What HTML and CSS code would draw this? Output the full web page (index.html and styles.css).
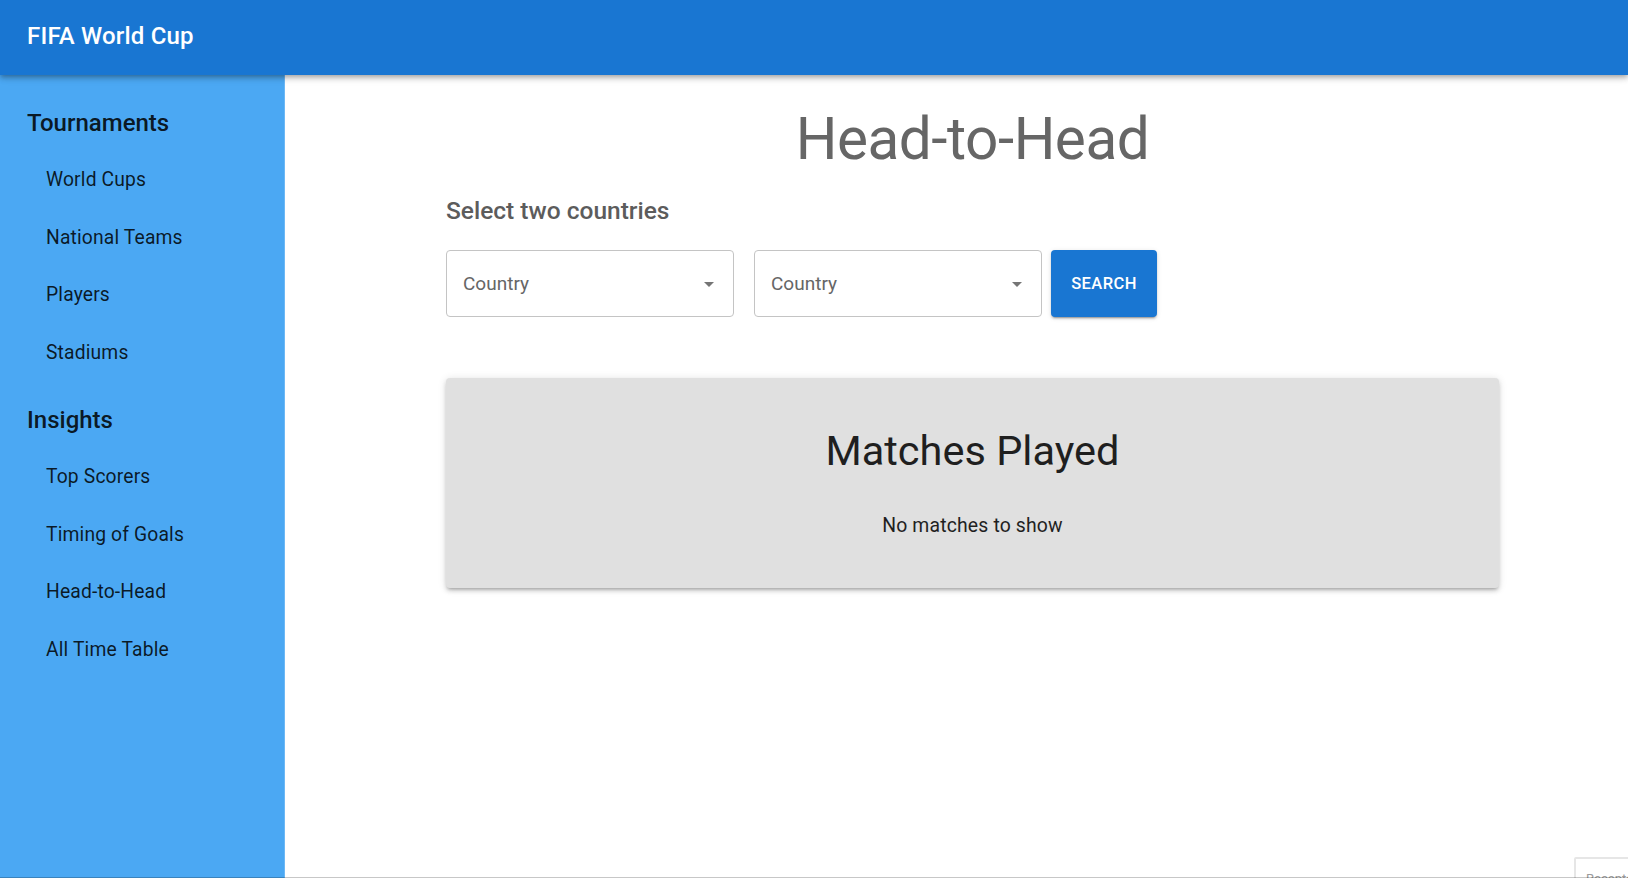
FILE: index.html
```html
<!DOCTYPE html>
<html lang="en">
<head>
<meta charset="utf-8">
<title>FIFA World Cup - Head-to-Head</title>
<link rel="stylesheet" href="styles.css">
</head>
<body>
<header class="appbar">
  <div class="brand">FIFA World Cup</div>
</header>
<div class="layout">
  <nav class="sidebar">
    <section class="nav-section">
      <h2 class="nav-heading">Tournaments</h2>
      <a class="nav-item">World Cups</a>
      <a class="nav-item">National Teams</a>
      <a class="nav-item">Players</a>
      <a class="nav-item">Stadiums</a>
    </section>
    <section class="nav-section">
      <h2 class="nav-heading">Insights</h2>
      <a class="nav-item">Top Scorers</a>
      <a class="nav-item">Timing of Goals</a>
      <a class="nav-item">Head-to-Head</a>
      <a class="nav-item">All Time Table</a>
    </section>
  </nav>
  <main class="main">
    <div class="container">
      <h1 class="page-title">Head-to-Head</h1>
      <h3 class="subtitle">Select two countries</h3>
      <div class="controls">
        <div class="select">
          <span class="select-label">Country</span>
          <svg class="select-arrow" viewBox="0 0 24 24" width="24" height="24"><path d="M7 10l5 5 5-5z" fill="currentColor"/></svg>
        </div>
        <div class="select">
          <span class="select-label">Country</span>
          <svg class="select-arrow" viewBox="0 0 24 24" width="24" height="24"><path d="M7 10l5 5 5-5z" fill="currentColor"/></svg>
        </div>
        <button class="btn">SEARCH</button>
      </div>
      <div class="card">
        <h2 class="card-title">Matches Played</h2>
        <p class="card-text">No matches to show</p>
      </div>
    </div>
  </main>
</div>
<div class="recaptcha"><span>Recaptcha</span></div>
<div class="bottom-edge"></div>
</body>
</html>
```

FILE: styles.css
```css
* { box-sizing: border-box; }
html, body { margin: 0; padding: 0; }
body {
  font-family: Roboto, "Liberation Sans", Arial, sans-serif;
  background: #ffffff;
  color: rgba(0,0,0,0.87);
  height: 878px;
  overflow: hidden;
}
.appbar {
  position: relative;
  z-index: 2;
  height: 75px;
  background: #1976d2;
  display: flex;
  align-items: center;
  padding-left: 27px;
  padding-bottom: 3px;
  box-shadow: 0 2px 4px -1px rgba(0,0,0,0.2), 0 4px 5px 0 rgba(0,0,0,0.14), 0 1px 10px 0 rgba(0,0,0,0.12);
}
.brand {
  color: #fff;
  font-size: 24px;
  font-weight: 500;
  letter-spacing: 0.2px;
}
.layout {
  display: flex;
  height: 803px;
}
.sidebar {
  width: 285px;
  flex: none;
  background: #4ba8f3;
  border-right: 1px solid #6db8f5;
  padding-top: 19px;
  display: flex;
  flex-direction: column;
  gap: 10px;
}
.nav-section { display: flex; flex-direction: column; }
.nav-heading {
  margin: 0;
  height: 57px;
  display: flex;
  align-items: center;
  padding-left: 27px;
  padding-top: 1px;
  font-size: 24px;
  font-weight: 500;
  color: rgba(0,0,0,0.87);
}
.nav-item {
  height: 57.5px;
  display: flex;
  align-items: center;
  padding-left: 46px;
  font-size: 19.3px;
  color: rgba(0,0,0,0.85);
  letter-spacing: 0.15px;
}
.main {
  flex: 1;
  padding-top: 28px;
}
.container {
  width: 1053px;
  margin-left: 161px;
}
.page-title {
  margin: 0;
  text-align: center;
  font-size: 58.5px;
  line-height: 72px;
  font-weight: 400;
  letter-spacing: -0.5px;
  color: #666666;
}
.subtitle {
  margin: 20px 0 0;
  font-size: 24.5px;
  line-height: 32px;
  font-weight: 500;
  color: #5c5c5c;
}
.controls {
  margin-top: 23px;
  display: flex;
  align-items: stretch;
  height: 67px;
}
.select {
  width: 288px;
  border: 1px solid #c4c4c4;
  border-radius: 4px;
  display: flex;
  align-items: center;
  justify-content: space-between;
  padding-left: 16px;
  padding-right: 12px;
  margin-right: 20px;
}
.select + .select { margin-right: 9px; }
.select-label {
  font-size: 19px;
  color: #666666;
}
.select-arrow { color: #757575; }
.btn {
  width: 106px;
  border: none;
  border-radius: 4px;
  background: #1976d2;
  color: #fff;
  font-family: inherit;
  font-size: 16.5px;
  font-weight: 500;
  letter-spacing: 0.4px;
  box-shadow: 0 3px 1px -2px rgba(0,0,0,0.2), 0 2px 2px 0 rgba(0,0,0,0.14), 0 1px 5px 0 rgba(0,0,0,0.12);
}
.card {
  margin-top: 61px;
  height: 210px;
  background: #e0e0e0;
  border-radius: 4px;
  box-shadow: 0 3px 3px -2px rgba(0,0,0,0.2), 0 3px 4px 0 rgba(0,0,0,0.14), 0 1px 8px 0 rgba(0,0,0,0.12);
  text-align: center;
  padding-top: 49px;
}
.card-title {
  margin: 0;
  font-size: 41.5px;
  line-height: 48px;
  font-weight: 400;
  color: #1f1f1f;
}
.card-text {
  margin: 39px 0 0;
  font-size: 19.4px;
  line-height: 24px;
  color: #1f1f1f;
  letter-spacing: 0.15px;
}
.recaptcha {
  position: fixed;
  left: 1574px;
  top: 857px;
  width: 256px;
  height: 60px;
  background: #ffffff;
  border: 2px solid #e6e6e6;
  border-radius: 2px;
  padding: 13px 0 0 10px;
  font-size: 13px;
  line-height: 14px;
  color: #9b9b9b;
}
.bottom-edge {
  position: fixed;
  left: 0;
  right: 0;
  bottom: 0;
  height: 1px;
  background: rgba(0,0,0,0.22);
}
```
